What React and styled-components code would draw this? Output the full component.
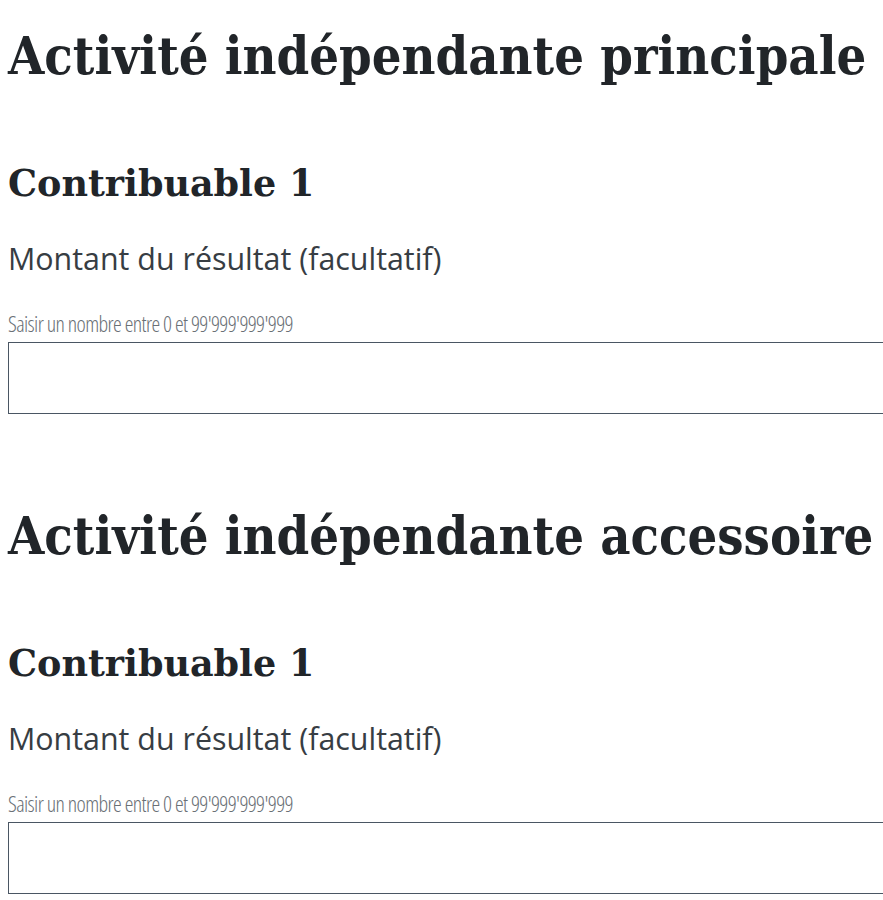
import React from 'react'
import styled, { createGlobalStyle } from 'styled-components'

const Global = createGlobalStyle`
body {
  margin: 0;
  background: #fff;
  font-family: 'Open Sans', sans-serif;
  overflow: hidden;
}
`

const Page = styled.div`
width: 883px;
padding: 24px 0 0 8px;
box-sizing: border-box;
overflow: hidden;
`

const Section = styled.section`
display: flex;
flex-direction: column;
padding-bottom: 90px;
`

const Title = styled.h1`
font-family: 'DejaVu Serif Condensed', 'DejaVu Serif', serif;
font-stretch: semi-condensed;
font-weight: 700;
font-size: 52px;
line-height: 64px;
color: #212529;
margin: 0;
white-space: nowrap;
`

const SubTitle = styled.h2`
font-family: 'DejaVu Serif', serif;
font-weight: 700;
font-size: 36.5px;
line-height: 44px;
color: #212529;
margin: 74px 0 0;
`

const Label = styled.label`
font-size: 30.4px;
line-height: 40px;
color: #373d43;
margin-top: 33px;
`

const Hint = styled.div`
font-size: 22px;
font-weight: 300;
font-stretch: 75%;
letter-spacing: -0.6px;
line-height: 28px;
color: #6a7076;
margin-top: 30px;
`

const Input = styled.input`
display: block;
width: 900px;
height: 72px;
box-sizing: border-box;
border: 1.5px solid #4a5663;
margin: 5px 0 0;
font-size: 20px;
padding: 0 12px;
`

const Block = ({ title }) => (
  <Section>
    <Title>{title}</Title>
    <SubTitle>Contribuable 1</SubTitle>
    <Label>Montant du résultat (facultatif)</Label>
    <Hint>Saisir un nombre entre 0 et 99'999'999'999</Hint>
    <Input type="text" />
  </Section>
)

export default function App() {
  return (
    <Page>
      <Global />
      <Block title="Activité indépendante principale" />
      <Block title="Activité indépendante accessoire" />
    </Page>
  )
}
